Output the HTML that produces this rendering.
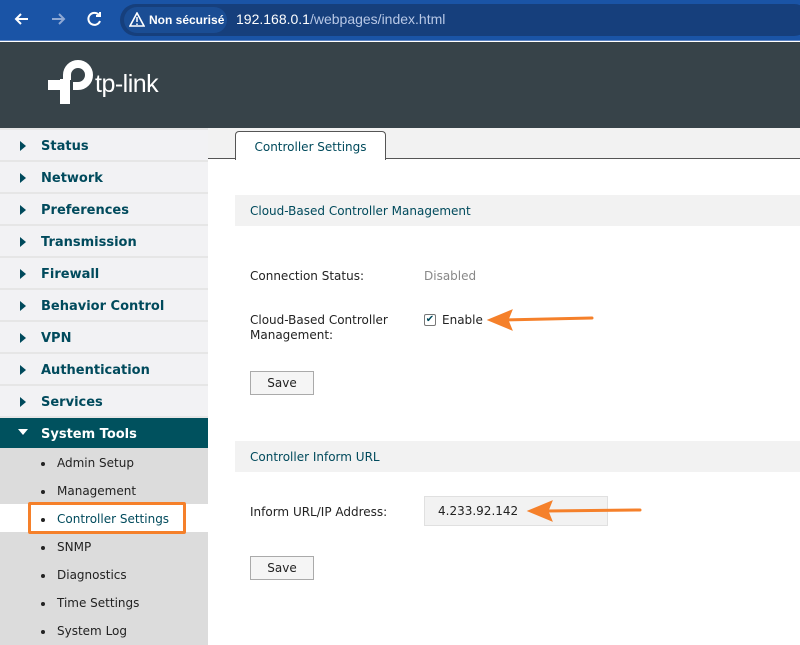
<!DOCTYPE html><html><head><style>
*{margin:0;padding:0;box-sizing:border-box}
body{width:800px;height:645px;overflow:hidden;background:#fff;font-family:"DejaVu Sans","Liberation Sans",sans-serif;position:relative}
.abs{position:absolute}
#bar{left:0;top:0;width:800px;height:41px;background:#1a54a6;border-bottom:1px solid #5b84c4}
#url{left:120px;top:4px;width:690px;height:32px;border-radius:16px;background:#163f7c}
#ns{left:124px;top:7px;height:26px;width:103px;border-radius:13px;background:#1a4d94;color:#fff;font:bold 12px "Liberation Sans",sans-serif;line-height:26px;padding-left:25px}
#hdr{left:0;top:42px;width:800px;height:86px;background:#374349}
.side{left:0;width:208px}
.it{position:absolute;left:0;width:208px;height:30px;background:#f2f2f4;color:#004a5c;font-weight:bold;font-size:13px;line-height:33px;padding-left:41px;overflow:hidden}
.it:before{content:"";position:absolute;left:20px;top:11px;border-left:6px solid #004a5c;border-top:5px solid transparent;border-bottom:5px solid transparent}
.sub{position:absolute;left:0;width:208px;height:28px;background:#dcdcdc;color:#222;font-size:12px;line-height:30px;padding-left:57px;overflow:hidden}
.sub:before{content:"";position:absolute;left:41px;top:14px;width:4px;height:4px;border-radius:2px;background:#222}
.lbl{position:absolute;font-size:12px;color:#222}
.sec{position:absolute;left:235px;width:565px;height:31px;background:#f2f2f2;color:#004a5c;font-size:12px;line-height:32px;padding-left:15px}
.btn{position:absolute;left:250px;width:64px;height:24px;border:1px solid #aaa;background:#f5f5f5;font-size:12px;text-align:center;line-height:22px;color:#222}
</style></head><body>
<div id="bar" class="abs"></div>
<svg class="abs" style="left:0;top:0" width="120" height="40"><g stroke="#fff" stroke-width="2" fill="none"><path d="M28 19H16M21 14l-5 5 5 5"/><path d="M52 19h12M59 14l5 5-5 5" stroke="#8fa9d4"/><path d="M99 15a6 6 0 1 0 1 6M100 12v4h-4"/></g></svg>
<div id="url" class="abs"></div>
<div id="ns" class="abs">Non sécurisé</div>
<svg class="abs" style="left:129px;top:12px" width="16" height="15"><path d="M8 1L15 14H1Z" fill="none" stroke="#fff" stroke-width="1.6"/><path d="M8 5v5M8 11.5v1.5" stroke="#fff" stroke-width="1.5"/></svg>
<div class="abs" style="left:236px;top:11px;font:14px 'Liberation Sans',sans-serif;color:#fff">192.168.0.1<span style="color:#b8c8e6">/webpages/index.html</span></div>
<div id="hdr" class="abs"></div>
<svg class="abs" style="left:0;top:0" width="100" height="110"><path d="M67 80V75A11 11 0 1 1 78 86H73" fill="none" stroke="#fff" stroke-width="8"/><rect x="48" y="80" width="18" height="10" fill="#fff"/><rect x="60" y="79" width="10" height="25" fill="#fff"/></svg>
<div class="abs" style="left:95px;top:70px;font:25px 'Liberation Sans',sans-serif;color:#fff;letter-spacing:-0.5px">tp-link</div>
<div class="abs side" style="top:128px;height:517px;background:#e6e6e6"></div>
<div class="it" style="top:130px">Status</div>
<div class="it" style="top:162px">Network</div>
<div class="it" style="top:194px">Preferences</div>
<div class="it" style="top:226px">Transmission</div>
<div class="it" style="top:258px">Firewall</div>
<div class="it" style="top:290px">Behavior Control</div>
<div class="it" style="top:322px">VPN</div>
<div class="it" style="top:354px">Authentication</div>
<div class="it" style="top:386px">Services</div>
<div class="it" style="top:418px;background:#00515e;color:#fff;height:30px">System Tools</div>
<div class="abs" style="left:18px;top:429px;border-top:6px solid #fff;border-left:5px solid transparent;border-right:5px solid transparent"></div>
<div class="sub" style="top:448px">Admin Setup</div>
<div class="sub" style="top:476px">Management</div>
<div class="sub" style="top:504px;background:#fff;color:#004a5c">Controller Settings</div>
<div class="sub" style="top:532px">SNMP</div>
<div class="sub" style="top:560px">Diagnostics</div>
<div class="sub" style="top:588px">Time Settings</div>
<div class="sub" style="top:616px;height:29px">System Log</div>
<div class="abs" style="left:28px;top:502px;width:158px;height:32px;border:3px solid #f5802a;border-radius:2px"></div>
<div class="abs" style="left:208px;top:128px;width:592px;height:31px;background:#f2f2f2;border-bottom:1px solid #555"></div>
<div class="abs" style="left:235px;top:131px;width:151px;height:29px;background:#fff;border:1px solid #555;border-bottom:none;border-radius:4px 4px 0 0;color:#004a5c;font-size:12px;line-height:30px;text-align:center">Controller Settings</div>
<div class="sec" style="top:195px">Cloud-Based Controller Management</div>
<div class="lbl" style="left:250px;top:269px">Connection Status:</div>
<div class="lbl" style="left:424px;top:269px;color:#888">Disabled</div>
<div class="lbl" style="left:250px;top:313px;line-height:15px">Cloud-Based Controller<br>Management:</div>
<div class="abs" style="left:424px;top:314px;width:12px;height:12px;border:1px solid #777;border-radius:2px;font-size:10px;line-height:10px;text-align:center;color:#004a5c">✔</div>
<div class="lbl" style="left:442px;top:313px">Enable</div>
<div class="btn" style="top:371px">Save</div>
<div class="sec" style="top:441px">Controller Inform URL</div>
<div class="lbl" style="left:250px;top:505px">Inform URL/IP Address:</div>
<div class="abs" style="left:424px;top:496px;width:184px;height:30px;background:#f2f2f2;border:1px solid #e0e0e0;font-size:12px;line-height:29px;padding-left:13px;color:#222">4.233.92.142</div>
<div class="btn" style="top:556px">Save</div>
<svg class="abs" style="left:0;top:0" width="800" height="645"><g fill="#f5802a" stroke="#f5802a" stroke-linecap="round"><path d="M505 320L592 318" stroke-width="3"/><path d="M488 320L512 310L508 320L512 330Z"/><path d="M546 511L640 510" stroke-width="3"/><path d="M528 511L552 501L548 511L552 521Z"/></g></svg>
</body></html>
